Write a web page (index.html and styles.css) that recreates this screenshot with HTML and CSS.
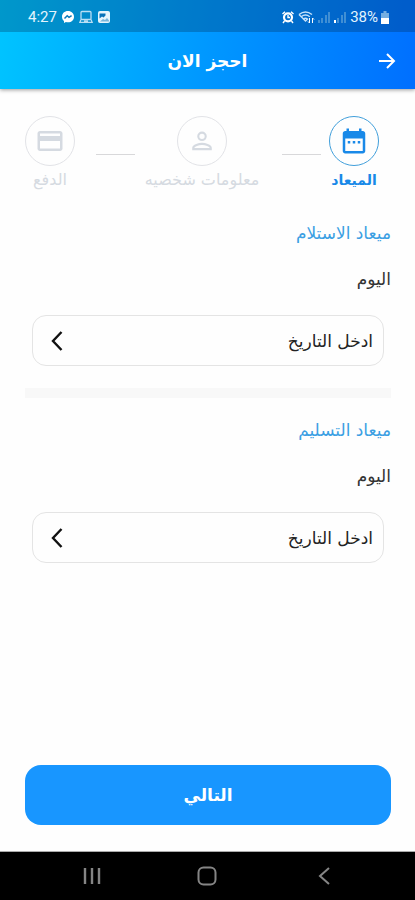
FILE: index.html
```html
<!DOCTYPE html>
<html lang="ar" dir="rtl">
<head>
<meta charset="utf-8">
<meta name="viewport" content="width=device-width, initial-scale=1">
<title>احجز الان</title>
<link rel="stylesheet" href="styles.css">
</head>
<body>
<div class="top">
  <div class="status" dir="ltr">
    <div class="status-group">
      <span class="time">4:27</span>
      <svg width="14" height="14" viewBox="0 0 14 14"><path d="M7 1C3.500 1 1 3.400 1 6.700c0 1.800.8 3.300 2 4.300V13l1.900-1c.7.2 1.300.3 2.100.3 3.500 0 6-2.400 6-5.600S10.500 1 7 1z" fill="#fff"/><path d="M3.500 8.500l2.700-2.700 1.800 1.600 2.600-1.700" fill="none" stroke="#0878ba" stroke-width="1.500"/></svg>
      <svg width="14" height="14" viewBox="0 0 14 14" fill="none" stroke="#b9def4" stroke-width="1.300"><rect x="2" y="1.500" width="10" height="8" rx="1"/><path d="M2 9.500L.8 12.400h12.400L12 9.500M5 11h4"/></svg>
      <svg width="14" height="14" viewBox="0 0 14 14"><rect x="1" y="1" width="12" height="12" rx="2" fill="#e5f4fc"/><path d="M2.500 3.500h6v2l-2 2-1.500-1-2.500 2z" fill="#0872b9"/><path d="M3 11.500l3-2.500 2 1 2-2 2 2.500v1z" fill="#79b5da"/></svg>
    </div>
    <div class="status-group status-right">
      <svg width="14" height="14" viewBox="0 0 14 14" fill="none" stroke="#fff"><circle cx="7" cy="7.300" r="4" stroke-width="2.200"/><path d="M7 5v2.500h2M1.500 4L4 1.700M12.500 4L10 1.700M3.500 11L2 13M10.500 11l1.500 2" stroke-width="1.400"/></svg>
      <svg width="17" height="14" viewBox="0 0 17 14" fill="none" stroke="#c4e1fa" stroke-width="1.400"><path d="M1 4.500q6.500-5 13 0M3.200 6.700q4.300-3.300 8.600 0M5.500 9q2-1.500 4 0L7.500 11zM1 4.500L7.500 11"/><path d="M11.500 8v5M10 11.500l1.500 1.500M14.500 13V8M16 9.500L14.500 8" stroke="#fff" stroke-width="1"/></svg>
      <svg width="13" height="12" viewBox="0 0 13 12" fill="#408fd4"><path d="M0 9h2v3H0zM3 7h2v5H3zM7 4h2v8H7zM10 1h2v11h-2z"/></svg>
      <svg width="13" height="12" viewBox="0 0 13 12" fill="#408fd4"><path d="M0 9h2v3H0z" fill="#fff"/><path d="M3 7h2v5H3zM7 4h2v8H7zM10 1h2v11h-2z"/></svg>
      <span class="battery">38%</span>
      <svg width="8" height="13" viewBox="0 0 8 13"><path d="M2.500 0h3v2H8v11H0V2h2.500z" fill="#75aee1"/><path d="M0 7h8v6H0z" fill="#fff"/></svg>
    </div>
  </div>
  <header class="header">
    <h1 class="title">احجز الان</h1>
    <button class="back" type="button" aria-label="رجوع"><svg width="18" height="18" viewBox="0 0 18 18" fill="none" stroke="#fff" stroke-width="2"><path d="M1 9h15M9 2l7 7-7 7"/></svg></button>
  </header>
</div>

<main class="main">
  <ol class="steps">
    <li class="step step-active" aria-current="step">
      <span class="circle"><svg width="30" height="30" viewBox="0 0 24 24" fill="currentColor"><path d="M19 4h-1V2h-2v2H8V2H6v2H5c-1.100 0-2 .9-2 2v14c0 1.100.9 2 2 2h14c1.100 0 2-.9 2-2V6c0-1.100-.9-2-2-2zm0 16H5V10h14v10z"/><path d="M7 12h2v2H7zM11 12h2v2h-2zM15 12h2v2h-2z"/></svg></span>
      <span class="step-label">الميعاد</span>
    </li>
    <li class="line" aria-hidden="true"></li>
    <li class="step step-wide">
      <span class="circle"><svg width="28" height="28" viewBox="0 0 24 24" fill="none" stroke="currentColor" stroke-width="1.800"><circle cx="12" cy="8" r="3.200"/><path d="M4.500 19v-1c0-2.400 5-3.500 7.500-3.500s7.500 1.100 7.500 3.500v1z"/></svg></span>
      <span class="step-label">معلومات شخصيه</span>
    </li>
    <li class="line" aria-hidden="true"></li>
    <li class="step">
      <span class="circle"><svg width="30" height="30" viewBox="0 0 24 24" fill="currentColor"><path d="M20 4H4c-1.100 0-2 .9-2 2v12c0 1.100.9 2 2 2h16c1.100 0 2-.9 2-2V6c0-1.100-.9-2-2-2zm0 14H4v-6h16v6zm0-10H4V6h16v2z"/></svg></span>
      <span class="step-label">الدفع</span>
    </li>
  </ol>

  <section class="section">
    <h2 class="heading">ميعاد الاستلام</h2>
    <label class="day" for="pickup">اليوم</label>
    <button class="field" id="pickup" type="button"><span>ادخل التاريخ</span><svg width="13" height="20" viewBox="0 0 13 20" fill="none" stroke="#111" stroke-width="2.400"><path d="M11.500 1L3 10l8.500 9"/></svg></button>
  </section>
  <hr class="divider">
  <section class="section">
    <h2 class="heading">ميعاد التسليم</h2>
    <label class="day" for="delivery">اليوم</label>
    <button class="field" id="delivery" type="button"><span>ادخل التاريخ</span><svg width="13" height="20" viewBox="0 0 13 20" fill="none" stroke="#111" stroke-width="2.400"><path d="M11.500 1L3 10l8.500 9"/></svg></button>
  </section>

  <button class="next" type="button">التالي</button>
</main>

<nav class="nav" dir="ltr" aria-label="النظام">
  <button type="button" aria-label="التطبيقات"><svg width="20" height="20" viewBox="0 0 20 20" fill="none" stroke="#858585" stroke-width="2.400"><path d="M4 2v16M11 2v16M18 2v16"/></svg></button>
  <button type="button" aria-label="الرئيسية"><svg width="20" height="20" viewBox="0 0 20 20" fill="none" stroke="#858585" stroke-width="2"><rect x="1.500" y="1.500" width="17" height="17" rx="5"/></svg></button>
  <button type="button" aria-label="رجوع للخلف"><svg width="20" height="20" viewBox="0 0 20 20" fill="none" stroke="#858585" stroke-width="2"><path d="M15 2l-9 8 9 8"/></svg></button>
</nav>
</body>
</html>
```
FILE: styles.css
```css
* {
  box-sizing: border-box;
}

body {
  margin: 0;
  min-height: 100vh;
  display: flex;
  flex-direction: column;
  background: #fefefe;
  color: #333;
  font-family: "DejaVu Sans", sans-serif;
}

button {
  margin: 0;
  padding: 0;
  border: 0;
  background: none;
  color: inherit;
  font: inherit;
  cursor: pointer;
}

svg {
  display: block;
  flex: none;
}

.top {
  background: linear-gradient(100deg, #00c5ff 0%, #0098ff 50%, #006fff 100%);
  box-shadow: 0 1px 4px rgba(0, 0, 0, 0.4);
}

.status {
  height: 32px;
  padding: 2px 26px 0 28px;
  display: flex;
  align-items: center;
  justify-content: space-between;
  background: rgba(0, 35, 70, 0.28);
  color: #e3f4fd;
  font-family: Roboto, sans-serif;
  font-size: 15px;
}

.status-group {
  display: flex;
  align-items: center;
  gap: 4px;
}

.status-right {
  gap: 3px;
}

.header {
  height: 57px;
  padding: 0 19px;
  display: grid;
  grid-template-columns: 18px 1fr 18px;
  align-items: center;
  color: #fff;
}

.title {
  grid-column: 2;
  grid-row: 1;
  margin: 0;
  font-size: 17px;
  line-height: 28px;
  text-align: center;
}

.back {
  grid-column: 1;
  grid-row: 1;
}

.main {
  flex: 1;
  padding: 27px 24px 26px 25px;
  display: flex;
  flex-direction: column;
}

.steps {
  margin: 0 0 29px;
  padding: 0 12px 0 0;
  list-style: none;
  display: flex;
}

.step {
  width: 50px;
  display: flex;
  flex-direction: column;
  align-items: center;
  color: #d5dae1;
}

.step-wide {
  width: 118px;
}

.step-active {
  color: #1989e8;
}

.circle {
  width: 50px;
  height: 50px;
  display: grid;
  place-items: center;
  border: 1px solid #e2e3e7;
  border-radius: 50%;
}

.step-active .circle {
  border-color: #419fdb;
}

.step-label {
  margin-top: 2px;
  font-size: 16px;
  line-height: 24px;
  white-space: nowrap;
}

.step-active .step-label {
  font-size: 14px;
  font-weight: bold;
}

.line {
  flex: 1;
  height: 1px;
  margin: 38px 8px 0 21px;
  background: #d8d8da;
}

.section {
  display: flex;
  flex-direction: column;
}

.heading {
  margin: 0;
  color: #3b9fe3;
  font-size: 17px;
  font-weight: normal;
  line-height: 24px;
}

.day {
  margin-top: 22px;
  font-size: 17px;
  line-height: 24px;
}

.field {
  height: 51px;
  margin: 24px 7px 0;
  padding: 0 10px 0 17px;
  display: flex;
  align-items: center;
  justify-content: space-between;
  border: 1px solid #e4e4e4;
  border-radius: 14px;
  color: #222;
  font-size: 17px;
}

.divider {
  width: 100%;
  height: 10px;
  margin: 22px 0 20px;
  border: 0;
  background: #f8f8f8;
}

.next {
  height: 60px;
  margin-top: auto;
  border-radius: 16px;
  background: #1896ff;
  color: #fff;
  font-size: 17px;
  font-weight: bold;
}

.nav {
  height: 49px;
  padding: 0 33px;
  display: flex;
  justify-content: space-around;
  align-items: center;
  border-top: 1px solid #aaa;
  background: #000;
}
```
